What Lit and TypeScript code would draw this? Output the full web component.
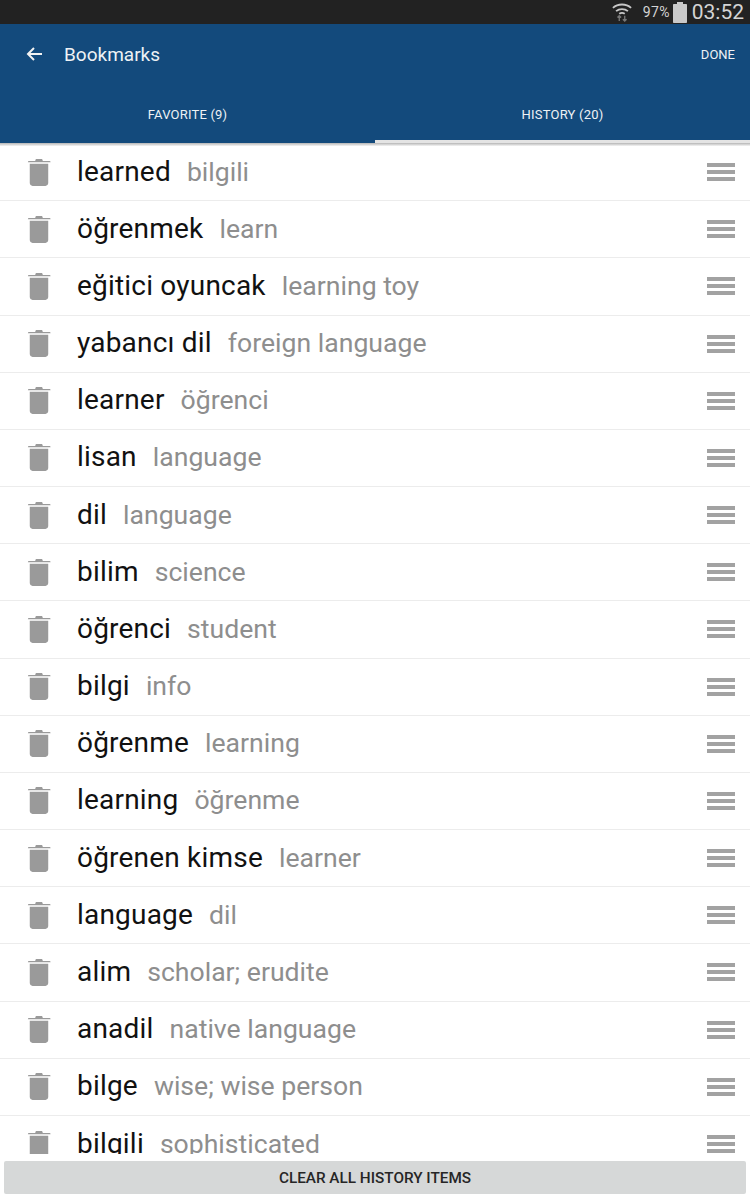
import { LitElement, html, css, svg } from 'lit';
import { customElement } from 'lit/decorators.js';

const history = [
  ['learned', 'bilgili'],
  ['öğrenmek', 'learn'],
  ['eğitici oyuncak', 'learning toy'],
  ['yabancı dil', 'foreign language'],
  ['learner', 'öğrenci'],
  ['lisan', 'language'],
  ['dil', 'language'],
  ['bilim', 'science'],
  ['öğrenci', 'student'],
  ['bilgi', 'info'],
  ['öğrenme', 'learning'],
  ['learning', 'öğrenme'],
  ['öğrenen kimse', 'learner'],
  ['language', 'dil'],
  ['alim', 'scholar; erudite'],
  ['anadil', 'native language'],
  ['bilge', 'wise; wise person'],
  ['bilgili', 'sophisticated'],
];

const trash = svg`<path d="M9 1.500C9 .7 9.700 0 10.500 0h5c.8 0 1.500.7 1.500 1.500V2h7.500c.6 0 1 .4 1 1v.5H1V3c0-.6.4-1 1-1h7zM3 5h20v21c0 1.700-1.300 3-3 3H6c-1.700 0-3-1.300-3-3z" fill="#9a9a9a"/>`;

@customElement('app-root')
export class AppRoot extends LitElement {
  static styles = css`
    :host {
      display: flex;
      flex-direction: column;
      width: 750px;
      height: 1200px;
      overflow: hidden;
      background: #fff;
      font-family: Roboto, sans-serif;
    }
    .status {
      height: 24px;
      flex: none;
      background: #222222;
      color: #d4d4d4;
      display: flex;
      align-items: center;
      justify-content: flex-end;
      padding-right: 6px;
      box-sizing: border-box;
    }
    .status svg {
      display: block;
    }
    .wifi {
      margin-right: 11px;
    }
    .pct {
      font-size: 14px;
      letter-spacing: 0.3px;
      margin-right: 3px;
    }
    .clock {
      font-size: 21px;
      margin-left: 5px;
    }
    .appbar {
      flex: none;
      height: 119px;
      background: #134a7c;
      color: #eef2f5;
      display: flex;
      flex-direction: column;
    }
    .top {
      height: 60px;
      display: flex;
      align-items: center;
      padding: 0 15px 0 26px;
    }
    .back {
      margin-right: 22px;
    }
    .title {
      font-size: 19px;
      flex: 1;
    }
    .done {
      font-size: 13px;
    }
    .tabs {
      flex: 1;
      display: flex;
    }
    .tab {
      flex: 1;
      font-size: 13px;
      letter-spacing: 0.2px;
      text-align: center;
      padding-top: 23px;
      box-sizing: border-box;
    }
    .tab.active {
      border-bottom: 3px solid #e4e4e4;
    }
    .shadow {
      flex: none;
      height: 3px;
      background: linear-gradient(#b5b5b5, #f4f4f4);
    }
    .list {
      flex: none;
      height: 1010px;
      margin-top: -2px;
      overflow: hidden;
    }
    .row {
      height: 57.18px;
      box-sizing: border-box;
      border-bottom: 1px solid #ececec;
      display: flex;
      align-items: center;
      padding: 0 15px 0 27px;
    }
    .trash {
      flex: none;
      margin-right: 26px;
    }
    .word {
      font-size: 28px;
      letter-spacing: 0.2px;
      color: #111;
      margin-top: -2px;
      margin-right: 16px;
      white-space: nowrap;
    }
    .meaning {
      font-size: 26.6px;
      color: #8e8e8e;
      margin-top: -2px;
      flex: 1;
      white-space: nowrap;
    }
    .handle {
      width: 28px;
      flex: none;
      display: flex;
      flex-direction: column;
      gap: 3px;
    }
    .handle i {
      display: block;
      height: 4px;
      background: #a2a2a2;
    }
    .footer {
      flex: none;
      height: 46px;
      background: #fff;
      padding: 7px 4px 6px;
      box-sizing: border-box;
    }
    .clear {
      height: 100%;
      background: #d6d8d8;
      border-radius: 2px;
      color: #262626;
      font-size: 15.3px;
      font-weight: 500;
      display: flex;
      align-items: center;
      justify-content: center;
    }
  `;

  render() {
    return html`
      <div class="status">
        <svg class="wifi" width="20" height="22" viewBox="0 0 22 22" fill="none" stroke="#c8c8c8" stroke-width="2">
          <path d="M1 6.500C6.500 1.500 15.500 1.500 21 6.500" />
          <path d="M4.500 10C8 7 14 7 17.500 10" />
          <path d="M8 13c2-1.400 4-1.400 6 0" />
          <path d="M8 15v6M6 17l2-2 2 2M14 21v-6M12 19l2 2 2-2" stroke="#777" stroke-width="1.500" />
        </svg>
        <span class="pct">97%</span>
        <svg width="14" height="21" viewBox="0 0 14 21"><path d="M4 0h6v2h3c.6 0 1 .4 1 1v17c0 .6-.4 1-1 1H1c-.6 0-1-.4-1-1V3c0-.6.4-1 1-1h3z" fill="#c9c9c9" /></svg>
        <span class="clock">03:52</span>
      </div>
      <div class="appbar">
        <div class="top">
          <svg class="back" width="16" height="14" viewBox="0 0 16 14" fill="none" stroke="#f2f2f2" stroke-width="2">
            <path d="M16 7H2M8 1 2 7l6 6" />
          </svg>
          <span class="title">Bookmarks</span>
          <span class="done">DONE</span>
        </div>
        <div class="tabs">
          <div class="tab">FAVORITE (9)</div>
          <div class="tab active">HISTORY (20)</div>
        </div>
      </div>
      <div class="shadow"></div>
      <div class="list">
        ${history.map(
          ([word, meaning]) => html`
            <div class="row">
              <svg class="trash" width="24" height="29" viewBox="0 0 26 29">${trash}</svg>
              <span class="word">${word}</span>
              <span class="meaning">${meaning}</span>
              <div class="handle"><i></i><i></i><i></i></div>
            </div>
          `
        )}
      </div>
      <div class="footer"><div class="clear">CLEAR ALL HISTORY ITEMS</div></div>
    `;
  }
}
